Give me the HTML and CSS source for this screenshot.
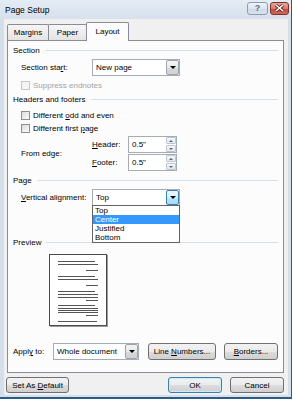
FILE: index.html
```html
<!DOCTYPE html>
<html lang="en">
<head>
    <meta charset="UTF-8">
    <title>Page Setup</title>
    <link rel="stylesheet" href="styles.css">
</head>
<body>
    <div class="window">
        <div class="titlebar">
            <span class="title">Page Setup</span>
            <div class="caption-btns">
                <span class="cap-btn help">?</span>
                <span class="cap-btn close">
                    <svg width="9" height="8" viewBox="0 0 9 8"><path d="M1 1 L8 7 M8 1 L1 7" stroke="#5a1a14" stroke-width="3"/><path d="M1 1 L8 7 M8 1 L1 7" stroke="#fff" stroke-width="1.6"/></svg>
                </span>
            </div>
        </div>

        <div class="client">
            <div class="tabs">
                <div class="tab tab-margins">Margins</div>
                <div class="tab tab-paper">Paper</div>
                <div class="tab tab-layout active">Layout</div>
            </div>

            <div class="panel">
                <div class="group-head"><span>Section</span><span class="rule"></span></div>
                <div class="row indent h17">
                    <span class="lbl">Section sta<u>r</u>t:</span>
                    <div class="combo">
                        <span class="combo-text">New page</span>
                        <span class="combo-btn"><span class="arrow"></span></span>
                    </div>
                </div>
                <div class="row check-row disabled first-check">
                    <span class="checkbox"></span><span>Suppress endnotes</span>
                </div>

                <div class="group-head mt5"><span>Headers and footers</span><span class="rule"></span></div>
                <div class="row check-row mt5">
                    <span class="checkbox"></span><span>Different <u>o</u>dd and even</span>
                </div>
                <div class="row check-row mt3">
                    <span class="checkbox"></span><span>Different first <u>p</u>age</span>
                </div>
                <div class="edge indent">
                    <span class="lbl">From edge:</span>
                    <div class="edge-fields">
                        <div class="row h17">
                            <span class="lbl-small"><u>H</u>eader:</span>
                            <div class="spin">
                                <span class="spin-text">0.5"</span>
                                <span class="spin-btns"><span class="up"></span><span class="down"></span></span>
                            </div>
                        </div>
                        <div class="row h17 mt1">
                            <span class="lbl-small"><u>F</u>ooter:</span>
                            <div class="spin">
                                <span class="spin-text">0.5"</span>
                                <span class="spin-btns"><span class="up"></span><span class="down"></span></span>
                            </div>
                        </div>
                    </div>
                </div>

                <div class="group-head mt3"><span>Page</span><span class="rule"></span></div>
                <div class="row indent h17 mt4">
                    <span class="lbl"><u>V</u>ertical alignment:</span>
                    <div class="combo open">
                        <span class="combo-text">Top</span>
                        <span class="combo-btn"><span class="arrow"></span></span>
                        <ul class="dropdown">
                            <li>Top</li>
                            <li class="selected">Center</li>
                            <li>Justified</li>
                            <li>Bottom</li>
                        </ul>
                    </div>
                </div>

                <div class="group-head preview-head"><span>Preview</span><span class="rule"></span></div>
                <div class="preview-page">
                    <svg width="56" height="70" viewBox="0 0 56 70">
                        <g stroke="#555" stroke-width="1">
                            <path d="M8 6.5 H45 M8 9.5 H48 M36 15.5 H48"/>
                            <path d="M8 21.5 H45 M8 24.5 H48 M36 30.5 H48"/>
                            <path d="M8 36.5 H45 M8 39.5 H48 M8 42.5 H48 M36 45.5 H48"/>
                            <path d="M8 50.5 H45 M8 53.5 H48 M8 55.5 H48 M8 57.5 H48 M36 60.5 H48"/>
                            <path d="M8 66.5 H47"/>
                        </g>
                    </svg>
                </div>

                <div class="row apply-row">
                    <span class="apply-lbl">Appl<u>y</u> to:</span>
                    <div class="combo apply-combo">
                        <span class="combo-text">Whole document</span>
                        <span class="combo-btn"><span class="arrow"></span></span>
                    </div>
                    <button class="btn btn-lines">Line <u>N</u>umbers...</button>
                    <button class="btn btn-borders"><u>B</u>orders...</button>
                </div>
            </div>

            <div class="footer">
                <button class="btn btn-default">Set As <u>D</u>efault</button>
                <button class="btn btn-ok">OK</button>
                <button class="btn btn-cancel">Cancel</button>
            </div>
        </div>
    </div>
</body>
</html>
```

FILE: styles.css
```css
* {
    box-sizing: border-box;
}
body {
    margin: 0;
    background: #fff;
    font-family: 'Liberation Sans', Arial, sans-serif;
    font-size: 8px;
    color: #000;
}
u {
    text-decoration: underline;
}
.window {
    width: 292px;
    height: 399px;
    background: #d3dfeb;
    border-right: 1px solid #3a5876;
    border-bottom: 2px solid #2e5a86;
    display: flex;
    flex-direction: column;
}
.titlebar {
    height: 19px;
    flex: none;
    display: flex;
    align-items: center;
    justify-content: space-between;
    padding: 0 2px 0 5px;
    background: linear-gradient(#e4ecf4, #d6e1ec);
}
.title {
    font-size: 8.5px;
}
.caption-btns {
    display: flex;
    gap: 2px;
    margin-top: -3px;
}
.cap-btn {
    height: 13px;
    border-radius: 3px;
    display: flex;
    align-items: center;
    justify-content: center;
}
.help {
    width: 21px;
    border: 1px solid #8c9db1;
    background: linear-gradient(#eef3f8 0%, #dde6ef 50%, #cdd9e5 51%, #d9e3ee 100%);
    color: #5d6b7b;
    font-size: 9px;
    font-weight: bold;
}
.close {
    width: 19px;
    border: 1px solid #7a3028;
    background: linear-gradient(#e7a99f 0%, #d7796c 50%, #c4463a 51%, #d2695a 100%);
}
.client {
    flex: 1;
    margin: 0 3px 2px 4px;
    padding: 3px 4px 0 2px;
    background: #f0f0f0;
    display: flex;
    flex-direction: column;
}
.tabs {
    display: flex;
    height: 18px;
    margin-left: 1px;
    position: relative;
    z-index: 1;
}
.tab {
    height: 16px;
    margin-top: 2px;
    border: 1px solid #898c95;
    border-bottom: none;
    border-radius: 2px 2px 0 0;
    background: linear-gradient(#f6f6f6, #e4e4e4);
    display: flex;
    align-items: center;
    justify-content: center;
}
.tab-margins {
    width: 42px;
}
.tab-paper {
    width: 39px;
    margin-left: -1px;
}
.tab-layout {
    width: 43px;
    margin-left: -1px;
}
.tab.active {
    height: 19px;
    margin-top: 0;
    background: #fcfcfc;
    padding-bottom: 1px;
}
.panel {
    height: 333px;
    margin-left: 1px;
    border: 1px solid #898c95;
    background: #fcfcfc;
    padding: 0 5px;
    position: relative;
}
.row {
    display: flex;
    align-items: center;
}
.h17 {
    height: 17px;
}
.mt1 { margin-top: 1px; }
.mt3 { margin-top: 3px; }
.mt4 { margin-top: 4px; }
.mt5 { margin-top: 5px; }
.group-head {
    height: 12px;
    display: flex;
    align-items: center;
    margin-top: 3px;
}
.group-head .rule {
    flex: 1;
    height: 1px;
    background: #d5dfe5;
    margin-left: 5px;
}
.indent {
    margin-left: 8px;
}
.indent.h17 {
    margin-top: 3px;
}
.lbl {
    width: 71px;
    flex: none;
}
.combo {
    width: 88px;
    height: 17px;
    border: 1px solid #a5acb5;
    background: #fff;
    display: flex;
    align-items: center;
    position: relative;
}
.combo-text {
    flex: 1;
    padding-left: 3px;
}
.combo-btn {
    width: 13px;
    height: 15px;
    border: 1px solid #9ea4ab;
    border-radius: 2px;
    background: linear-gradient(#f4f4f4 0%, #e9e9e9 50%, #dadada 51%, #d0d0d0 100%);
    display: flex;
    align-items: center;
    justify-content: center;
    margin-right: 0;
}
.arrow {
    width: 0;
    height: 0;
    border-left: 3px solid transparent;
    border-right: 3px solid transparent;
    border-top: 3px solid #000;
}
.combo.open .combo-btn {
    border-color: #3c7fb1;
    background: linear-gradient(#eaf6fd 0%, #d9f0fc 50%, #bee6fd 51%, #a7d9f5 100%);
}
.dropdown {
    position: absolute;
    left: -1px;
    top: 15px;
    width: 88px;
    margin: 0;
    padding: 0;
    list-style: none;
    border: 1px solid #646464;
    background: #fff;
    z-index: 5;
}
.dropdown li {
    height: 9px;
    line-height: 9px;
    padding-left: 2px;
}
.dropdown li.selected {
    background: #3399ff;
    color: #fff;
}
.check-row {
    height: 10px;
    margin-left: 8px;
}
.first-check {
    margin-top: 4px;
}
.checkbox {
    width: 9px;
    height: 9px;
    border: 1px solid #8f8f8f;
    background: linear-gradient(135deg, #dcdcdc, #fbfbfb);
    margin-right: 3px;
    flex: none;
}
.disabled {
    color: #a3a3a3;
}
.disabled .checkbox {
    border-color: #c8c8c8;
    background: #f4f4f4;
}
.edge {
    display: flex;
    align-items: center;
    margin-top: 3px;
}
.lbl-small {
    width: 36px;
    flex: none;
}
.spin {
    width: 49px;
    height: 17px;
    border: 1px solid #a5acb5;
    background: #fff;
    display: flex;
    align-items: stretch;
}
.spin-text {
    flex: 1;
    padding-left: 3px;
    display: flex;
    align-items: center;
}
.spin-btns {
    width: 10px;
    display: flex;
    flex-direction: column;
    gap: 1px;
    padding: 0;
}
.spin-btns span {
    flex: 1;
    border: 1px solid #c0c6cd;
    border-radius: 1px;
    background: linear-gradient(#f5f7f9, #e3e8ee);
    display: flex;
    align-items: center;
    justify-content: center;
}
.spin-btns .up::after {
    content: "";
    border-left: 2px solid transparent;
    border-right: 2px solid transparent;
    border-bottom: 2px solid #4a6a8c;
}
.spin-btns .down::after {
    content: "";
    border-left: 2px solid transparent;
    border-right: 2px solid transparent;
    border-top: 2px solid #4a6a8c;
}
.preview-head {
    margin-top: 30px;
}
.preview-page {
    width: 58px;
    height: 72px;
    margin: 6px 0 0 36px;
    border: 1px solid #4b4b4b;
    box-shadow: 1px 1px 0 #9a9a9a;
    background: #fff;
}
.preview-page svg {
    display: block;
}
.apply-row {
    height: 17px;
    margin-top: 17px;
}
.apply-lbl {
    width: 40px;
    flex: none;
}
.apply-combo {
    width: 86px;
}
.btn {
    height: 17px;
    padding: 0;
    border: 1px solid #707070;
    border-radius: 3px;
    background: linear-gradient(#f2f2f2 0%, #ebebeb 50%, #dddddd 51%, #cfcfcf 100%);
    font-family: inherit;
    font-size: 8px;
    color: #000;
}
.btn-lines {
    width: 68px;
    margin-left: 9px;
}
.btn-borders {
    width: 54px;
    margin-left: 8px;
}
.footer {
    display: flex;
    margin-top: 4px;
}
.btn-default {
    width: 63px;
    height: 16px;
}
.btn-ok {
    width: 54px;
    height: 16px;
    margin-left: auto;
    border-color: #3c7fb1;
    box-shadow: inset 0 0 0 1px #c8ecfb;
}
.btn-cancel {
    width: 54px;
    height: 16px;
    margin-left: 8px;
}
```
